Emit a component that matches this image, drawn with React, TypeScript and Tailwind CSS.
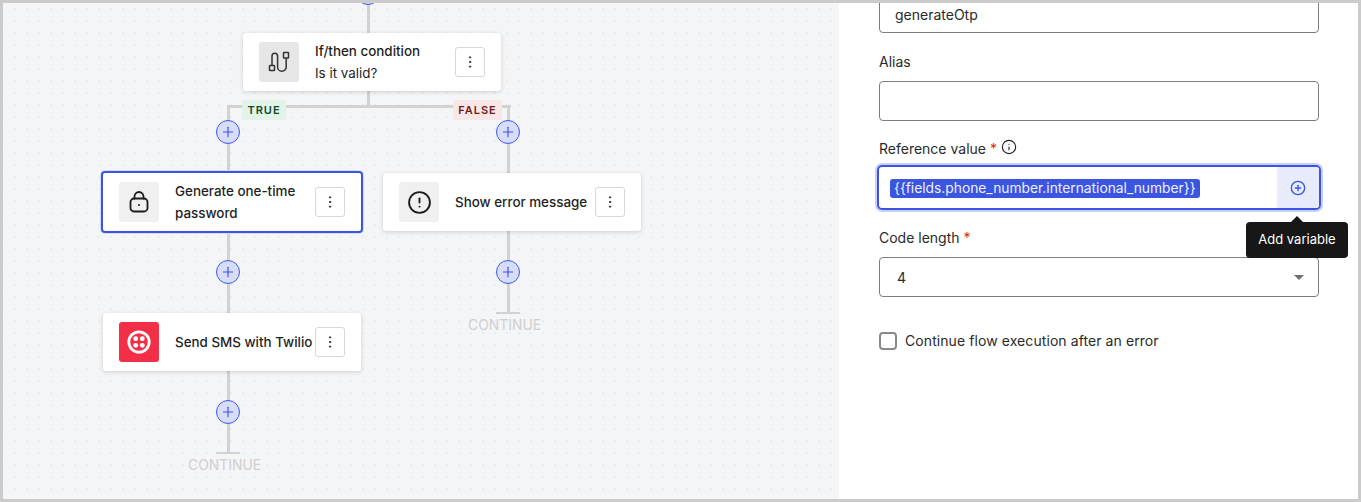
import React from "react";
import { CirclePlus, Info, EllipsisVertical, CircleAlert, Plus } from "lucide-react";

const FONT = "[font-family:Inter,'Liberation_Sans',sans-serif]";

function AddButton({ x, y }: { x: number; y: number }) {
  return (
    <div
      className="absolute flex h-6 w-6 -translate-x-1/2 -translate-y-1/2 items-center justify-center rounded-full border border-[#4059e6] bg-[#d6dcfa] text-[#3b55e0]"
      style={{ left: x, top: y }}
    >
      <Plus size={16} strokeWidth={1.7} />
    </div>
  );
}

function Line({ x, y, w, h }: { x: number; y: number; w: number; h: number }) {
  return <div className="absolute bg-[#d2d2d2]" style={{ left: x, top: y, width: w, height: h }} />;
}

function Node({
  x,
  y,
  w,
  h,
  icon,
  iconBg,
  selected,
  children,
}: {
  x: number;
  y: number;
  w: number;
  h: number;
  icon: React.ReactNode;
  iconBg: string;
  selected?: boolean;
  children: React.ReactNode;
}) {
  return (
    <div
      className={
        selected
          ? "absolute flex items-center rounded-[4px] border-2 border-[#3b55e0] bg-white pl-[16px] pr-[16px] shadow-[0_0_0_1px_#d5daf8]"
          : "absolute flex items-center rounded-[3px] bg-white pl-[16px] pr-[16px] shadow-[0_1px_4px_rgba(0,0,0,0.16)]"
      }
      style={{ left: x, top: y, width: w, height: h }}
    >
      <div className="flex h-10 w-10 shrink-0 items-center justify-center rounded-[3px]" style={{ background: iconBg }}>
        {icon}
      </div>
      <div className="ml-4 min-w-0 flex-1 text-[13.4px] font-medium leading-[22px] text-[#1f1f1f]">{children}</div>
      <div className="flex h-[30px] w-[30px] shrink-0 items-center justify-center rounded-[3px] border border-[#d6d6d6] bg-white text-[#222]">
        <EllipsisVertical size={16} strokeWidth={1.5} />
      </div>
    </div>
  );
}

function Label({ children }: { children: React.ReactNode }) {
  return <div className="text-[14px] leading-[20px] text-[#2a2a2a]">{children}</div>;
}

export default function App() {
  return (
    <div className={`${FONT} flex h-[502px] w-[1361px] overflow-hidden border-[3px] border-[#cbcbcb] bg-white`}>
      <div className="relative h-full w-[836px] shrink-0 overflow-hidden bg-[#f4f5f7] bg-[radial-gradient(#ebecef_1.3px,transparent_1.6px)] bg-[size:12px_12px] bg-[position:6px_0px]">
        <Line x={364} y={0} w={3} h={30} />
        <Line x={364} y={88} w={3} h={16} />
        <Line x={224} y={102} w={284} h={3} />
        <Line x={224} y={102} w={3} h={67} />
        <Line x={504} y={102} w={3} h={68} />
        <Line x={224} y={230} w={3} h={80} />
        <Line x={224} y={368} w={3} h={82} />
        <Line x={213} y={449} w={24} h={2} />
        <Line x={504} y={228} w={3} h={82} />
        <Line x={493} y={309} w={24} h={2} />

        <AddButton x={365} y={-10} />
        <AddButton x={225} y={129} />
        <AddButton x={505} y={129} />
        <AddButton x={225} y={269} />
        <AddButton x={505} y={269} />
        <AddButton x={225} y={409} />

        <div className="absolute left-[239px] top-[97px] flex h-5 w-[44px] items-center justify-center rounded-[3px] bg-[#e2f3e8] text-[11px] font-semibold tracking-[0.09em] text-[#14492c]">
          TRUE
        </div>
        <div className="absolute left-[450px] top-[97px] flex h-5 w-[49px] items-center justify-center rounded-[3px] bg-[#f9e7e7] text-[11px] font-semibold tracking-[0.09em] text-[#701c1c]">
          FALSE
        </div>

        <Node
          x={240}
          y={30}
          w={258}
          h={58}
          iconBg="#e6e6e6"
          icon={
            <svg width="24" height="24" viewBox="0 0 24 24" fill="none" stroke="#333" strokeWidth="1.5" strokeLinecap="round">
              <rect x="2.5" y="15.5" width="5" height="5" rx="0.6" />
              <rect x="16.5" y="2.5" width="5" height="5.5" rx="0.6" />
              <path d="M5 15V6a2.8 2.8 0 0 1 5.6 0V17a4.3 4.3 0 0 0 8.6 0V8.5" />
            </svg>
          }
        >
          <div>If/then condition</div>
          <div className="font-normal">Is it valid?</div>
        </Node>

        <Node
          x={98}
          y={168}
          w={262}
          h={62}
          selected
          iconBg="#f0f0f0"
          icon={
            <svg width="22" height="24" viewBox="0 0 22 24" fill="none" stroke="#1c1c1c" strokeWidth="1.8" strokeLinecap="round">
              <rect x="2.5" y="8.5" width="17" height="13" rx="3.5" />
              <path d="M6.5 8.5V6.5a4.5 4.5 0 0 1 9 0V8.5" />
              <circle cx="11" cy="15" r="1" fill="#1c1c1c" stroke="none" />
            </svg>
          }
        >
          Generate one-time password
        </Node>

        <Node x={380} y={170} w={258} h={58} iconBg="#f0f0f0" icon={<CircleAlert size={25} strokeWidth={1.8} color="#1c1c1c" />}>
          <span className="whitespace-nowrap">Show error message</span>
        </Node>

        <Node
          x={100}
          y={310}
          w={258}
          h={58}
          iconBg="#f22f46"
          icon={
            <svg width="24" height="24" viewBox="0 0 24 24">
              <circle cx="12" cy="12" r="10.2" fill="none" stroke="#fff" strokeWidth="2.8" />
              <circle cx="8.7" cy="8.7" r="2.4" fill="#fff" />
              <circle cx="15.3" cy="8.7" r="2.4" fill="#fff" />
              <circle cx="8.7" cy="15.3" r="2.4" fill="#fff" />
              <circle cx="15.3" cy="15.3" r="2.4" fill="#fff" />
            </svg>
          }
        >
          <span className="whitespace-nowrap">Send SMS with Twilio</span>
        </Node>

        <div className="absolute left-[465px] top-[313px] text-[13.9px] leading-[18px] text-[#cfcfcf]">CONTINUE</div>
        <div className="absolute left-[185px] top-[453px] text-[13.9px] leading-[18px] text-[#cfcfcf]">CONTINUE</div>
      </div>

      <div className="relative h-full flex-1 bg-white">
        <div className="-mt-[8px] flex flex-col pl-[40px] pr-[39px]">
          <div className="flex h-[38px] items-center rounded-[4px] border border-[#7d7d7d] px-[15px] text-[14px] text-[#2a2a2a]">
            generateOtp
          </div>
          <div className="mt-[19px]">
            <Label>Alias</Label>
          </div>
          <div className="mt-[9px] h-10 rounded-[4px] border border-[#7d7d7d]" />
          <div className="mt-[18px] flex h-5 items-center gap-[4px]">
            <Label>
              Reference value <span className="text-[#d92d20]">*</span>
            </Label>
            <Info size={16} strokeWidth={1.7} color="#222" className="-mt-[4px]" />
          </div>
          <div className="-mx-[4px] mt-[4px] flex h-[49px] rounded-[7px] border-2 border-[#c9d0f8]">
            <div className="flex flex-1 overflow-hidden rounded-[5px] border-2 border-[#3b55e0]">
              <div className="flex flex-1 items-center pl-[11px] pt-[1px]">
                <span className="rounded-[3px] bg-[#3b55e0] px-[4px] text-[13.8px] leading-[19px] text-[#eef0ff]">
                  {"{{fields.phone_number.international_number}}"}
                </span>
              </div>
              <div className="flex w-[42px] items-center justify-center bg-[#e8ebfb] pr-[1px] text-[#3b55e0]">
                <CirclePlus size={16} strokeWidth={2} />
              </div>
            </div>
          </div>
          <div className="mt-[16px]">
            <Label>
              Code length <span className="text-[#d92d20]">*</span>
            </Label>
          </div>
          <div className="mt-[9px] flex h-10 items-center justify-between rounded-[4px] border border-[#7d7d7d] pl-[17px] pr-[14px] text-[14px] text-[#2a2a2a]">
            <span>4</span>
            <span className="h-0 w-0 border-x-[5.5px] border-t-[5.5px] border-x-transparent border-t-[#6e6e6e]" />
          </div>
          <div className="mt-[34px] flex items-center gap-[8px]">
            <span className="h-[18px] w-[18px] rounded-[4px] border-2 border-[#8a8a8a]" />
            <span className="text-[14px] leading-[20px] tracking-[0.08px] text-[#2a2a2a]">Continue flow execution after an error</span>
          </div>
        </div>

        <div className="absolute left-[407px] top-[219px] flex h-9 w-[102px] items-center justify-center rounded-[4px] bg-[#171717] text-[13px] text-white">
          <span className="absolute -top-[6px] left-1/2 h-0 w-0 -translate-x-1/2 border-x-[6px] border-b-[6px] border-x-transparent border-b-[#171717]" />
          Add variable
        </div>
      </div>
    </div>
  );
}
